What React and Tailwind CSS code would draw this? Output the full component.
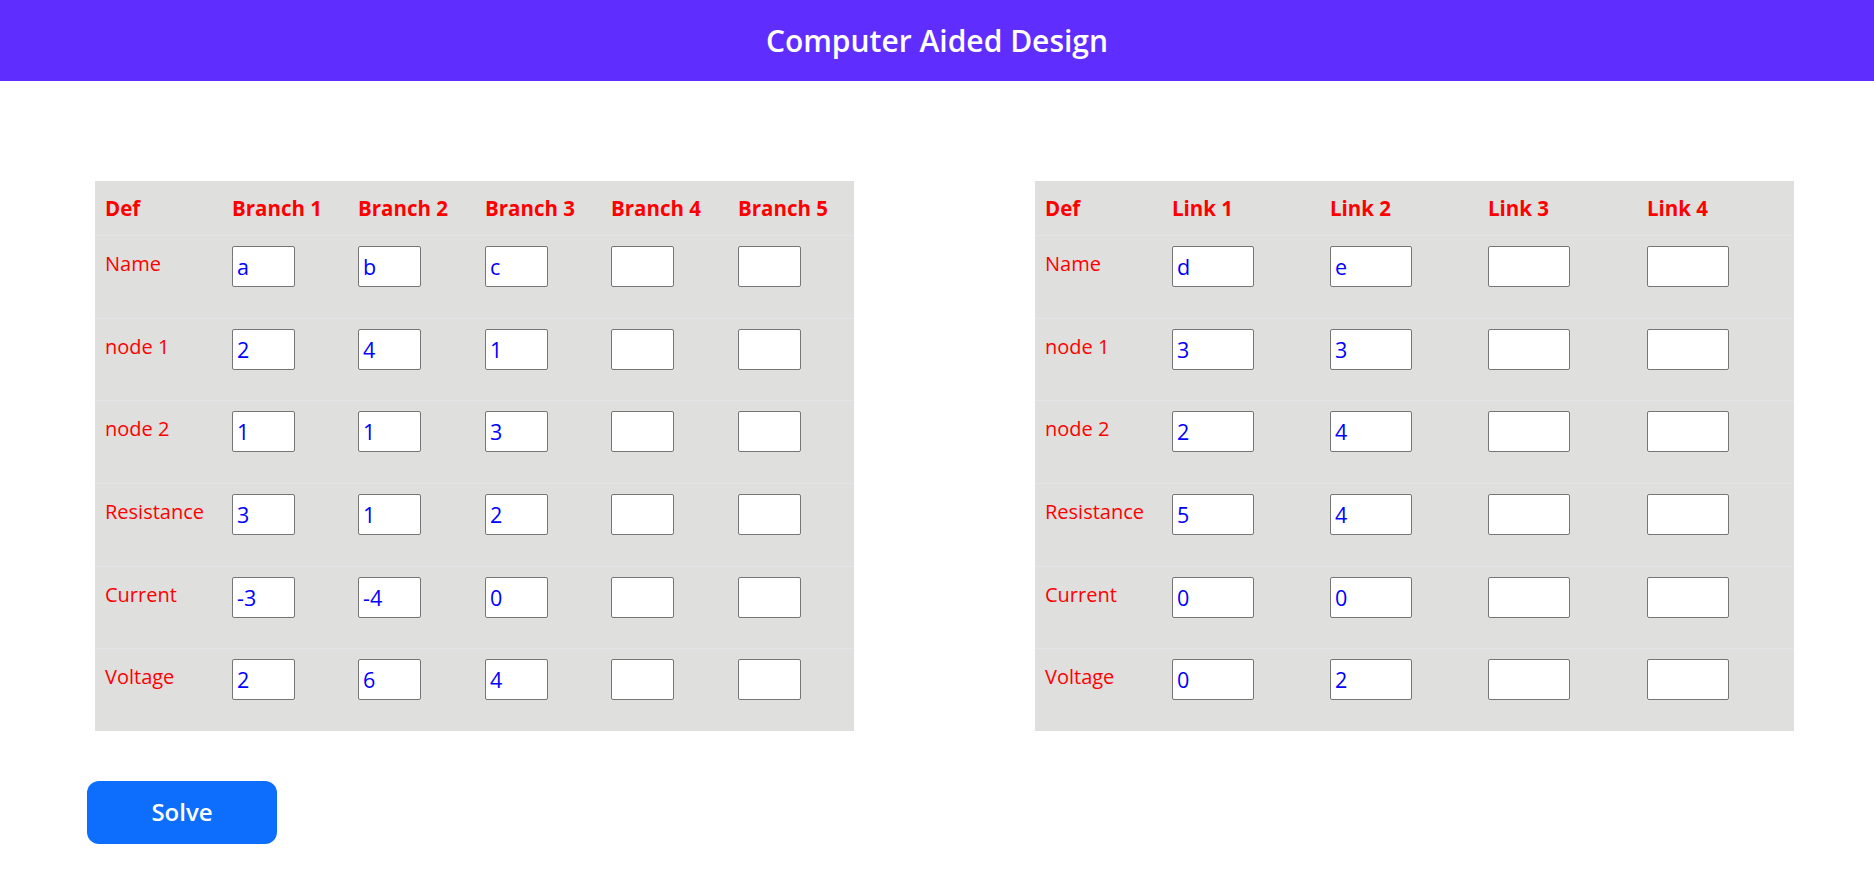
import React from "react";

const font = { fontFamily: '"Open Sans", "Noto Sans", sans-serif' };

const rowLabels = ["Name", "node 1", "node 2", "Resistance", "Current", "Voltage"];

const branches = [
  ["a", "2", "1", "3", "-3", "2"],
  ["b", "4", "1", "1", "-4", "6"],
  ["c", "1", "3", "2", "0", "4"],
  ["", "", "", "", "", ""],
  ["", "", "", "", "", ""],
];

const links = [
  ["d", "3", "2", "5", "0", "0"],
  ["e", "3", "4", "4", "0", "2"],
  ["", "", "", "", "", ""],
  ["", "", "", "", "", ""],
];

function DefTable({ title, cols, gridCls, inputCls }) {
  return (
    <div className="w-[759px] bg-[#dfdfde] pl-[10px]">
      <div className={`grid ${gridCls} h-[54px] items-center`}>
        <div className="text-[20.5px] font-bold text-[#ff0000]">Def</div>
        {cols.map((_, i) => (
          <div key={i} className="text-[20.5px] font-bold text-[#ff0000]">
            {title} {i + 1}
          </div>
        ))}
      </div>
      {rowLabels.map((label, r) => (
        <div
          key={label}
          className={`grid ${gridCls} h-[82.67px] -ml-[10px] pl-[10px] border-t border-[#e3e3e8] items-start`}
        >
          <div className="pt-[13px] text-[20px] leading-[29px] text-[#ff0000]">{label}</div>
          {cols.map((col, c) => (
            <div key={c} className="pt-[10px]">
              <input
                defaultValue={col[r]}
                className={`${inputCls} h-[41px] bg-white border border-[#767676] rounded-[2px] px-[4px] text-[21.5px] text-[#0000ff] outline-none`}
                style={font}
              />
            </div>
          ))}
        </div>
      ))}
    </div>
  );
}

export default function App() {
  return (
    <div className="min-h-screen bg-white" style={font}>
      <div className="h-[81px] bg-[#5f2eff] flex items-center justify-center">
        <h1 className="text-[30px] font-semibold text-white">Computer Aided Design</h1>
      </div>

      <div className="pt-[100px] pl-[87px]">
        <div className="flex gap-[181px] pl-[8px]">
          <DefTable
            title="Branch"
            cols={branches}
            gridCls="grid-cols-[127px_126px_127px_126px_127px_1fr]"
            inputCls="w-[63px]"
          />
          <DefTable
            title="Link"
            cols={links}
            gridCls="grid-cols-[127px_158px_158px_159px_1fr]"
            inputCls="w-[82px]"
          />
        </div>

        <button className="mt-[50px] w-[190px] h-[63px] rounded-[12px] bg-[#0d6efd] text-white text-[24px] font-semibold">
          Solve
        </button>
      </div>
    </div>
  );
}
